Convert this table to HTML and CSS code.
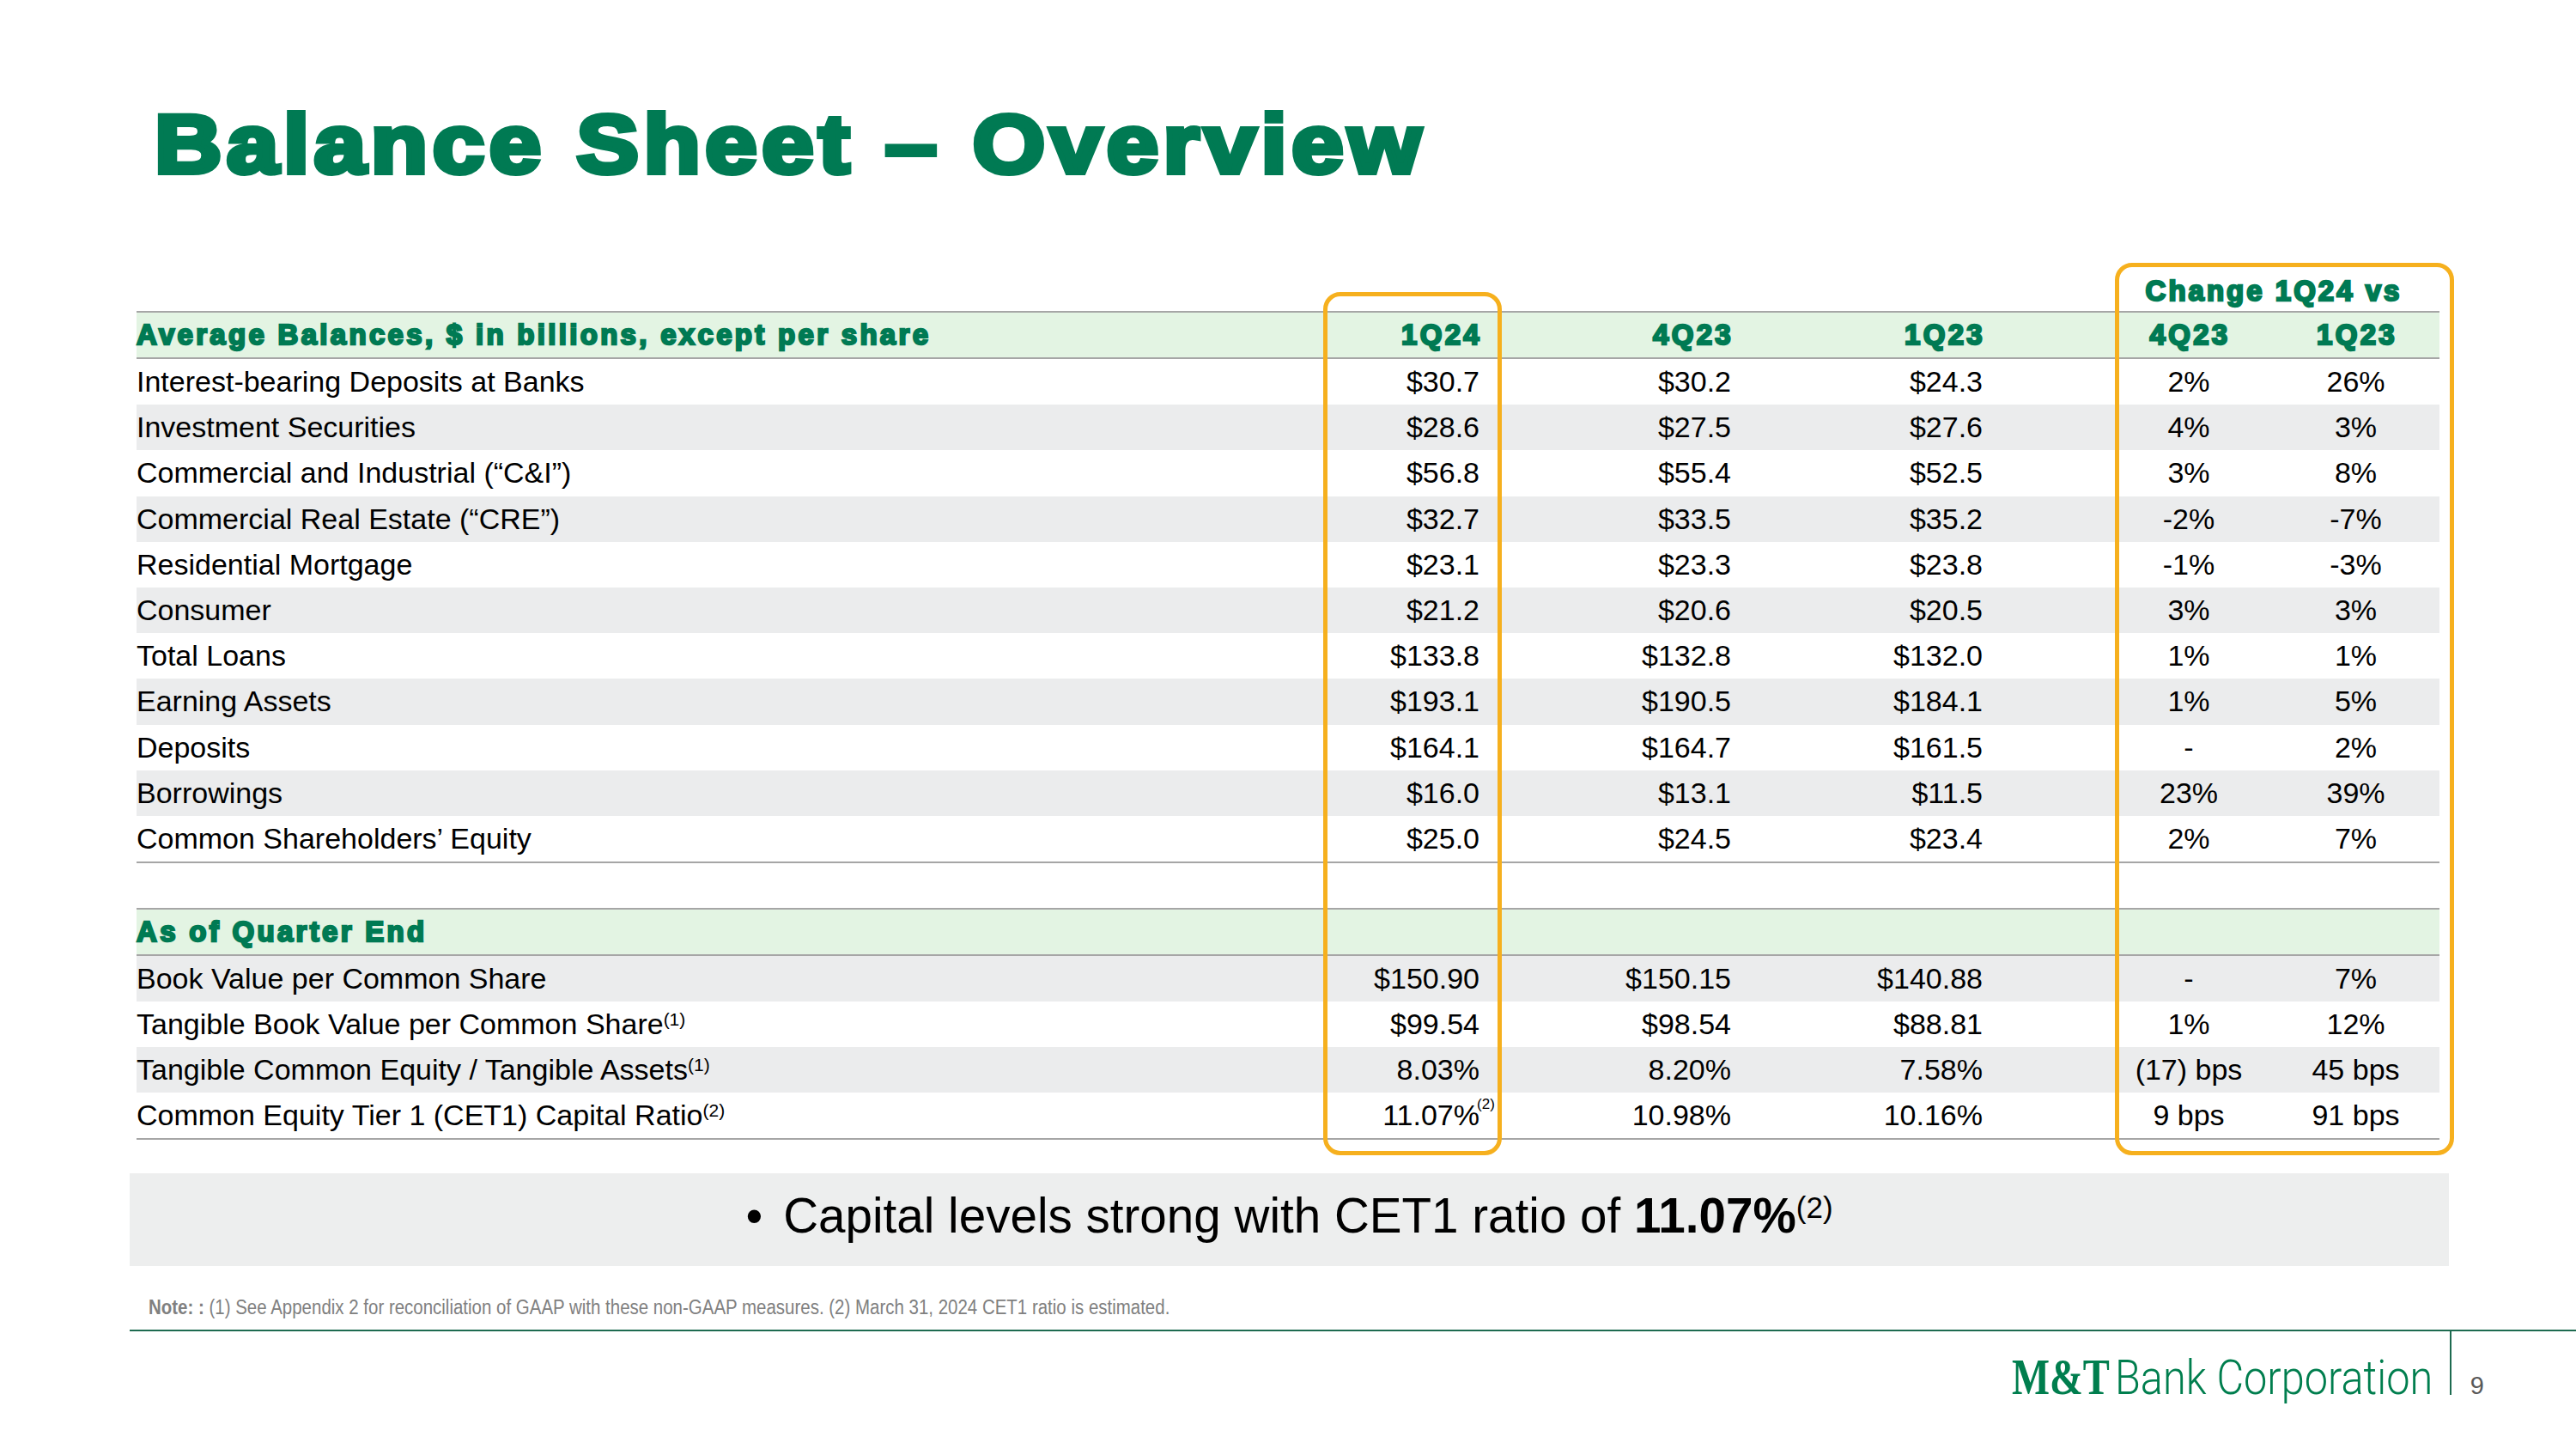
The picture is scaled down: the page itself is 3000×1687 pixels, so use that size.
FILE: index.html
```html
<!DOCTYPE html>
<html lang="en">
<head>
<meta charset="utf-8">
<title>Balance Sheet – Overview</title>
<link rel="stylesheet" href="styles.css">
</head>
<body>
<div class="slide">
  <h1 class="title">Balance Sheet – Overview</h1>

  <div class="tbl">
    <div class="row super"><div class="chg-head">Change 1Q24 vs</div></div>
    <div class="rule"></div>
    <div class="row band head">
      <div class="lab">Average Balances, $ in billions, except per share</div>
      <div class="n1">1Q24</div><div class="n2">4Q23</div><div class="n3">1Q23</div><div class="ch">4Q23</div><div class="ch">1Q23</div>
    </div>
    <div class="rule"></div>

    <div class="row"><div class="lab">Interest-bearing Deposits at Banks</div><div class="n1">$30.7</div><div class="n2">$30.2</div><div class="n3">$24.3</div><div class="ch">2%</div><div class="ch">26%</div></div>
    <div class="row alt"><div class="lab">Investment Securities</div><div class="n1">$28.6</div><div class="n2">$27.5</div><div class="n3">$27.6</div><div class="ch">4%</div><div class="ch">3%</div></div>
    <div class="row"><div class="lab">Commercial and Industrial (“C&amp;I”)</div><div class="n1">$56.8</div><div class="n2">$55.4</div><div class="n3">$52.5</div><div class="ch">3%</div><div class="ch">8%</div></div>
    <div class="row alt"><div class="lab">Commercial Real Estate (“CRE”)</div><div class="n1">$32.7</div><div class="n2">$33.5</div><div class="n3">$35.2</div><div class="ch">-2%</div><div class="ch">-7%</div></div>
    <div class="row"><div class="lab">Residential Mortgage</div><div class="n1">$23.1</div><div class="n2">$23.3</div><div class="n3">$23.8</div><div class="ch">-1%</div><div class="ch">-3%</div></div>
    <div class="row alt"><div class="lab">Consumer</div><div class="n1">$21.2</div><div class="n2">$20.6</div><div class="n3">$20.5</div><div class="ch">3%</div><div class="ch">3%</div></div>
    <div class="row"><div class="lab">Total Loans</div><div class="n1">$133.8</div><div class="n2">$132.8</div><div class="n3">$132.0</div><div class="ch">1%</div><div class="ch">1%</div></div>
    <div class="row alt"><div class="lab">Earning Assets</div><div class="n1">$193.1</div><div class="n2">$190.5</div><div class="n3">$184.1</div><div class="ch">1%</div><div class="ch">5%</div></div>
    <div class="row"><div class="lab">Deposits</div><div class="n1">$164.1</div><div class="n2">$164.7</div><div class="n3">$161.5</div><div class="ch">-</div><div class="ch">2%</div></div>
    <div class="row alt"><div class="lab">Borrowings</div><div class="n1">$16.0</div><div class="n2">$13.1</div><div class="n3">$11.5</div><div class="ch">23%</div><div class="ch">39%</div></div>
    <div class="row"><div class="lab">Common Shareholders’ Equity</div><div class="n1">$25.0</div><div class="n2">$24.5</div><div class="n3">$23.4</div><div class="ch">2%</div><div class="ch">7%</div></div>

    <div class="rule"></div>
    <div class="row blank"></div>
    <div class="rule"></div>
    <div class="row band head"><div class="lab">As of Quarter End</div></div>
    <div class="rule"></div>

    <div class="row alt q"><div class="lab">Book Value per Common Share</div><div class="n1">$150.90</div><div class="n2">$150.15</div><div class="n3">$140.88</div><div class="ch">-</div><div class="ch">7%</div></div>
    <div class="row q"><div class="lab">Tangible Book Value per Common Share<span class="fn">(1)</span></div><div class="n1">$99.54</div><div class="n2">$98.54</div><div class="n3">$88.81</div><div class="ch">1%</div><div class="ch">12%</div></div>
    <div class="row alt q"><div class="lab">Tangible Common Equity / Tangible Assets<span class="fn">(1)</span></div><div class="n1">8.03%</div><div class="n2">8.20%</div><div class="n3">7.58%</div><div class="ch">(17) bps</div><div class="ch">45 bps</div></div>
    <div class="row q"><div class="lab">Common Equity Tier 1 (CET1) Capital Ratio<span class="fn">(2)</span></div><div class="n1">11.07%<span class="fn-over">(2)</span></div><div class="n2">10.98%</div><div class="n3">10.16%</div><div class="ch">9 bps</div><div class="ch">91 bps</div></div>
    <div class="rule"></div>

    <div class="hl hl-q"></div>
    <div class="hl hl-chg"></div>
  </div>

  <div class="callout">
    <p class="callout-text"><span class="bullet">•</span>Capital levels strong with CET1 ratio of <b>11.07%</b><span class="fn-call">(2)</span></p>
  </div>

  <div class="note-box">
    <p class="note"><b>Note: :</b> (1) See Appendix 2 for reconciliation of GAAP with these non-GAAP measures. (2) March 31, 2024 CET1 ratio is estimated.</p>
  </div>

  <div class="footer">
    <div class="logo">
      <div class="logo-mt-box"><span class="logo-mt">M&amp;T</span></div>
      <div class="logo-bank-box"><span class="logo-bank">Bank Corporation</span></div>
    </div>
    <div class="sep"></div>
    <div class="page">9</div>
  </div>
</div>
</body>
</html>
```

FILE: styles.css
```css
html, body {
  margin: 0;
  padding: 0;
  background: #ffffff;
}

body {
  width: 3000px;
  height: 1687px;
  overflow: hidden;
  font-family: "Liberation Sans", Arial, sans-serif;
  color: #000000;
}

.slide {
  width: 3000px;
  height: 1687px;
  display: flex;
  flex-direction: column;
  align-items: flex-start;
}

.title {
  margin: 120px 0 0 180px;
  font-family: "Liberation Sans", Arial, sans-serif;
  font-weight: 700;
  font-size: 96px;
  line-height: 96px;
  letter-spacing: 5px;
  color: #007a53;
  -webkit-text-stroke: 6px #007a53;
  white-space: nowrap;
  transform: scaleX(1.13);
  transform-origin: 0 50%;
}

/* ---------- table ---------- */
.tbl {
  position: relative;
  margin: 90px 0 0 159px;
  width: 2682px;
}

.row {
  display: grid;
  grid-template-columns: 1281px 293px 293px 426px 194px 195px;
  align-items: center;
  height: 53.2px;
  font-size: 34px;
  white-space: nowrap;
}

.row.q {
  height: 53px;
}

.row.alt {
  background: #ebeced;
}

.row.band {
  background: #e3f4e3;
  height: 52px;
}

.row.blank {
  height: 52px;
}

.row.super {
  height: 56px;
  align-items: start;
}

.rule {
  height: 2px;
  background: #a6a6a6;
}

.lab {
  padding-left: 0;
}

.n1, .n2 {
  text-align: right;
  padding-right: 10px;
}

.n3 {
  text-align: right;
  padding-right: 143px;
}

.ch {
  text-align: center;
}

.head,
.chg-head {
  font-family: "Liberation Sans", Arial, sans-serif;
  font-weight: 700;
  font-size: 33px;
  letter-spacing: 3.3px;
  color: #007a53;
  -webkit-text-stroke: 2.4px #007a53;
}

.head .n1, .head .n2 {
  padding-right: 7px;
}

.head .n3 {
  padding-right: 140px;
}

.head .ch {
  padding-left: 3px;
}

.chg-head {
  grid-column: 5 / span 2;
  text-align: center;
  padding: 13px 0 0 3px;
  line-height: 40px;
  letter-spacing: 3px;
}

.fn {
  font-size: 21px;
  vertical-align: 10px;
  line-height: 0;
}

.fn-over {
  font-size: 17px;
  vertical-align: 19px;
  line-height: 0;
  margin-left: -3px;
  margin-right: -17.8px;
}

/* highlight boxes laid over the table */
.hl {
  position: absolute;
  box-sizing: border-box;
  border: 5px solid #f6b01e;
  border-radius: 20px;
  pointer-events: none;
}

.hl-q {
  left: 1382px;
  top: 34px;
  width: 208px;
  height: 1005px;
}

.hl-chg {
  left: 2304px;
  top: 0;
  width: 395px;
  height: 1039px;
}

/* ---------- callout ---------- */
.callout {
  margin: 39px 0 0 151px;
  width: 2701px;
  height: 108px;
  background: #edeeee;
  display: flex;
  align-items: center;
  justify-content: center;
}

.callout-text {
  margin: 0 0 10px 0;
  font-size: 56.6px;
  white-space: nowrap;
}

.callout-text b {
  font-weight: 700;
}

.bullet {
  margin-right: 24px;
}

.fn-call {
  font-size: 35px;
  vertical-align: 17px;
  line-height: 0;
}

/* ---------- note ---------- */
.note-box {
  margin: 35px 0 0 173px;
  width: 1200px;
  height: 26px;
}

.note {
  display: inline-block;
  margin: 0;
  font-family: "Liberation Sans", Arial, sans-serif;
  font-size: 23px;
  line-height: 26px;
  color: #808080;
  white-space: nowrap;
  transform: scaleX(0.89);
  transform-origin: 0 50%;
}

.note b {
  font-weight: 700;
}

/* ---------- footer ---------- */
.footer {
  margin: 13px 0 0 151px;
  width: 2849px;
  height: 137px;
  border-top: 2px solid #1e6b50;
  display: flex;
  justify-content: flex-end;
  align-items: flex-start;
}

.logo {
  display: flex;
  align-items: baseline;
  margin-top: 23px;
  line-height: 60px;
  color: #007e4e;
}

.logo-mt-box {
  width: 114px;
  margin-right: 6px;
}

.logo-bank-box {
  width: 369px;
}

.logo-mt {
  display: inline-block;
  font-family: "Liberation Serif", "Times New Roman", serif;
  font-weight: 700;
  font-size: 59px;
  white-space: nowrap;
  transform: scaleX(0.79);
  transform-origin: 0 50%;
}

.logo-bank {
  display: inline-block;
  font-family: Roboto, "Liberation Sans", sans-serif;
  font-weight: 300;
  font-size: 55px;
  white-space: nowrap;
  transform: scaleX(0.885);
  transform-origin: 0 50%;
}

.sep {
  width: 2px;
  height: 74px;
  margin-left: 21px;
  background: #1e6b50;
}

.page {
  margin: 46px 107px 0 22px;
  font-size: 29px;
  line-height: 34px;
  color: #595959;
}
```
